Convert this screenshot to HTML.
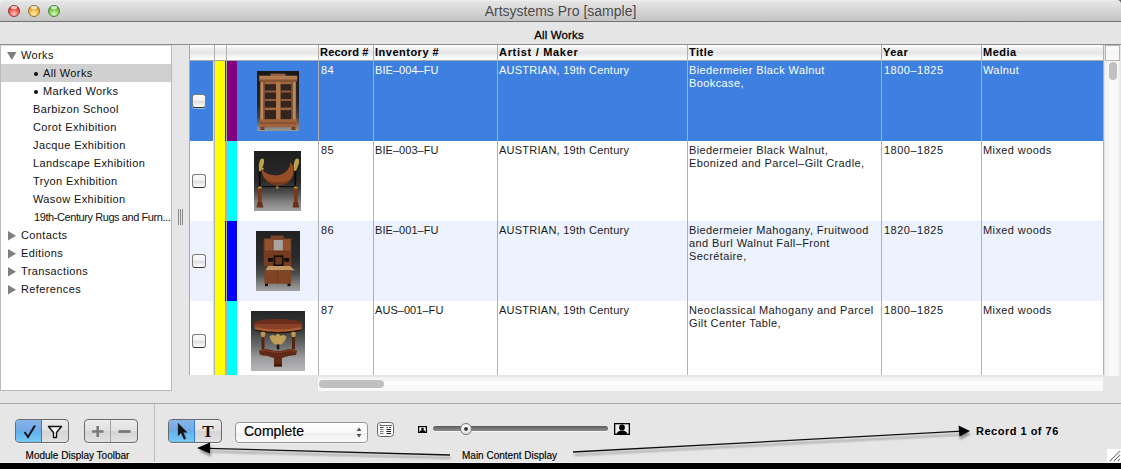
<!DOCTYPE html><html><head><meta charset="utf-8"><style>
*{box-sizing:border-box;margin:0;padding:0}
html,body{width:1121px;height:469px;overflow:hidden;background:#e6e6e6;font-family:"Liberation Sans",sans-serif;position:relative}
.a{position:absolute}
.sb{position:absolute;left:1px;width:170px;height:18px;font-size:11px;line-height:18px;color:#111;white-space:nowrap;letter-spacing:0.38px}
.cell{position:absolute;font-size:11px;line-height:13px;color:#1a1a1a;white-space:nowrap;letter-spacing:0.4px}
.sel .cell{color:#fff}
.hd{position:absolute;top:46px;font-size:11px;font-weight:bold;line-height:13px;color:#000;white-space:nowrap;letter-spacing:0.5px}
.cb{position:absolute;width:14px;height:14px;border-radius:3px;border:1px solid #7a7a7a;border-bottom:1.5px solid #333;background:linear-gradient(#fdfdfd,#f0f0f0 45%,#dedede 55%,#f5f5f5 85%,#fff);box-shadow:0 1px 0 rgba(255,255,255,.5)}
.vl{position:absolute;width:1px;background:#b0b0b0}
</style></head><body>
<div class="a" style="left:0;top:0;width:1121px;height:22px;background:linear-gradient(#f4f4f4 0px,#e6e6e6 1px,#d6d6d6 50%,#c4c4c4);border-bottom:1px solid #727272"></div>
<div class="a" style="left:0;top:3px;width:1121px;text-align:center;font-size:14px;line-height:16px;color:#4b4b4b">Artsystems Pro [sample]</div>
<div class="a" style="left:8px;top:5px;width:12px;height:12px;border-radius:50%;border:1px solid #8c3b34;background:radial-gradient(circle at 50% 80%,#ffc8c0,#f0483c 60%,#b42418)"></div>
<div class="a" style="left:11px;top:6px;width:6px;height:3px;border-radius:50%;background:rgba(255,255,255,.75)"></div>
<div class="a" style="left:28px;top:5px;width:12px;height:12px;border-radius:50%;border:1px solid #927035;background:radial-gradient(circle at 50% 80%,#fff0b0,#f0aa30 60%,#b07010)"></div>
<div class="a" style="left:31px;top:6px;width:6px;height:3px;border-radius:50%;background:rgba(255,255,255,.75)"></div>
<div class="a" style="left:48px;top:5px;width:12px;height:12px;border-radius:50%;border:1px solid #4b8636;background:radial-gradient(circle at 50% 80%,#dcf8bc,#72c446 60%,#38861c)"></div>
<div class="a" style="left:51px;top:6px;width:6px;height:3px;border-radius:50%;background:rgba(255,255,255,.75)"></div>
<svg class="a" style="left:1117px;top:0" width="4" height="4"><path d="M0 0H4V4Q4 0 0 0Z" fill="#4e5a6c"/></svg>
<svg class="a" style="left:0;top:0" width="5" height="5"><path d="M0 0H5Q0 0 0 5Z" fill="#f0f0f0"/></svg>
<div class="a" style="left:0;top:22px;width:1121px;height:22px;background:#e5e5e5"></div>
<div class="a" style="left:0;top:28.3px;width:1118px;text-align:center;font-size:11.5px;line-height:14px;color:#000;-webkit-text-stroke:0.3px #000;letter-spacing:0.15px">All Works</div>
<div class="a" style="left:0;top:44px;width:1121px;height:1px;background:#8c8c8c"></div>
<div class="a" style="left:0;top:45px;width:172px;height:346px;background:#fff;border:1px solid #bababa;border-top:1px solid #dcdcdc"></div>
<svg class="a" style="left:7px;top:52px" width="10" height="9"><path d="M0 0H9.5L4.75 8Z" fill="#7f7f7f"/></svg>
<div class="sb" style="left:21px;top:46px;">Works</div>
<div class="a" style="left:1px;top:64px;width:170px;height:18px;background:#d0d0d0"></div>
<div class="a" style="left:34px;top:72px;width:4px;height:4px;border-radius:50%;background:#111"></div>
<div class="sb" style="left:43px;top:64px;">All Works</div>
<div class="a" style="left:34px;top:90px;width:4px;height:4px;border-radius:50%;background:#111"></div>
<div class="sb" style="left:43px;top:82px;">Marked Works</div>
<div class="sb" style="left:33px;top:100px;">Barbizon School</div>
<div class="sb" style="left:33px;top:118px;">Corot Exhibition</div>
<div class="sb" style="left:33px;top:136px;">Jacque Exhibition</div>
<div class="sb" style="left:33px;top:154px;">Landscape Exhibition</div>
<div class="sb" style="left:33px;top:172px;">Tryon Exhibition</div>
<div class="sb" style="left:33px;top:190px;">Wasow Exhibition</div>
<div class="sb" style="left:34px;top:208px;letter-spacing:-0.42px;">19th-Century Rugs and Furn...</div>
<svg class="a" style="left:8px;top:231px" width="9" height="10"><path d="M0 0L8 4.75L0 9.5Z" fill="#7f7f7f"/></svg>
<div class="sb" style="left:21px;top:226px;">Contacts</div>
<svg class="a" style="left:8px;top:249px" width="9" height="10"><path d="M0 0L8 4.75L0 9.5Z" fill="#7f7f7f"/></svg>
<div class="sb" style="left:21px;top:244px;">Editions</div>
<svg class="a" style="left:8px;top:267px" width="9" height="10"><path d="M0 0L8 4.75L0 9.5Z" fill="#7f7f7f"/></svg>
<div class="sb" style="left:21px;top:262px;">Transactions</div>
<svg class="a" style="left:8px;top:285px" width="9" height="10"><path d="M0 0L8 4.75L0 9.5Z" fill="#7f7f7f"/></svg>
<div class="sb" style="left:21px;top:280px;">References</div>
<div class="a" style="left:178px;top:209px;width:1px;height:16px;background:#8a8a8a"></div>
<div class="a" style="left:180px;top:209px;width:1px;height:16px;background:#8a8a8a"></div>
<div class="a" style="left:182px;top:209px;width:1px;height:16px;background:#8a8a8a"></div>
<div class="a" style="left:189px;top:45px;width:915px;height:330px;background:#fff;border-left:1px solid #a8a8a8"></div>
<div class="a" style="left:190px;top:45px;width:914px;height:16px;background:linear-gradient(#fff 0px,#fafafa 1px,#eeeeee 4px,#eaeaea 6.5px,#e3e3e3 7.5px,#ebebeb 9px,#f6f6f6 12px,#fff 15px);border-bottom:1px solid #a9a9a9"></div>
<div class="hd" style="left:320px;letter-spacing:0.2px">Record #</div>
<div class="hd" style="left:375px;">Inventory #</div>
<div class="hd" style="left:499px;letter-spacing:0.7px">Artist / Maker</div>
<div class="hd" style="left:689px;">Title</div>
<div class="hd" style="left:883px;">Year</div>
<div class="hd" style="left:983px;">Media</div>
<div class="a sel" style="left:190px;top:61px;width:914px;height:80px;background:#3d80df">
<div class="a" style="left:23px;top:0;width:12px;height:80px;background:#ffff00"></div>
<div class="a" style="left:35px;top:0;width:12px;height:80px;background:#800080"></div>
<div class="cb" style="left:2px;top:33px"></div>
<div class="cell" style="left:131px;top:3px">84</div>
<div class="cell" style="left:185px;top:3px;letter-spacing:0.05px">BIE&ndash;004&ndash;FU</div>
<div class="cell" style="left:309px;top:3px;letter-spacing:0.25px">AUSTRIAN, 19th Century</div>
<div class="cell" style="left:499px;top:3px">Biedermeier Black Walnut</div>
<div class="cell" style="left:499px;top:16px">Bookcase,</div>
<div class="cell" style="left:694px;top:3px;letter-spacing:0.5px">1800&ndash;1825</div>
<div class="cell" style="left:793px;top:3px">Walnut</div>
</div>
<div class="a " style="left:190px;top:141px;width:914px;height:80px;background:#ffffff">
<div class="a" style="left:23px;top:0;width:12px;height:80px;background:#ffff00"></div>
<div class="a" style="left:35px;top:0;width:12px;height:80px;background:#00ffff"></div>
<div class="cb" style="left:2px;top:33px"></div>
<div class="cell" style="left:131px;top:3px">85</div>
<div class="cell" style="left:185px;top:3px;letter-spacing:0.05px">BIE&ndash;003&ndash;FU</div>
<div class="cell" style="left:309px;top:3px;letter-spacing:0.25px">AUSTRIAN, 19th Century</div>
<div class="cell" style="left:499px;top:3px">Biedermeier Black Walnut,</div>
<div class="cell" style="left:499px;top:16px">Ebonized and Parcel&ndash;Gilt Cradle,</div>
<div class="cell" style="left:694px;top:3px;letter-spacing:0.5px">1800&ndash;1825</div>
<div class="cell" style="left:793px;top:3px">Mixed woods</div>
</div>
<div class="a " style="left:190px;top:221px;width:914px;height:80px;background:#edf3fe">
<div class="a" style="left:23px;top:0;width:12px;height:80px;background:#ffff00"></div>
<div class="a" style="left:35px;top:0;width:12px;height:80px;background:#0000ff"></div>
<div class="cb" style="left:2px;top:33px"></div>
<div class="cell" style="left:131px;top:3px">86</div>
<div class="cell" style="left:185px;top:3px;letter-spacing:0.05px">BIE&ndash;001&ndash;FU</div>
<div class="cell" style="left:309px;top:3px;letter-spacing:0.25px">AUSTRIAN, 19th Century</div>
<div class="cell" style="left:499px;top:3px">Biedermeier Mahogany, Fruitwood</div>
<div class="cell" style="left:499px;top:16px">and Burl Walnut Fall&ndash;Front</div>
<div class="cell" style="left:499px;top:29px">Secr&eacute;taire,</div>
<div class="cell" style="left:694px;top:3px;letter-spacing:0.5px">1820&ndash;1825</div>
<div class="cell" style="left:793px;top:3px">Mixed woods</div>
</div>
<div class="a " style="left:190px;top:301px;width:914px;height:74px;background:#ffffff">
<div class="a" style="left:23px;top:0;width:12px;height:74px;background:#ffff00"></div>
<div class="a" style="left:35px;top:0;width:12px;height:74px;background:#00ffff"></div>
<div class="cb" style="left:2px;top:33px"></div>
<div class="cell" style="left:131px;top:3px">87</div>
<div class="cell" style="left:185px;top:3px;letter-spacing:0.05px">AUS&ndash;001&ndash;FU</div>
<div class="cell" style="left:309px;top:3px;letter-spacing:0.25px">AUSTRIAN, 19th Century</div>
<div class="cell" style="left:499px;top:3px">Neoclassical Mahogany and Parcel</div>
<div class="cell" style="left:499px;top:16px">Gilt Center Table,</div>
<div class="cell" style="left:694px;top:3px;letter-spacing:0.5px">1800&ndash;1825</div>
<div class="cell" style="left:793px;top:3px">Mixed woods</div>
</div>
<div class="vl" style="left:214px;top:45px;height:330px"></div>
<div class="vl" style="left:226px;top:45px;height:330px"></div>
<div class="vl" style="left:318px;top:45px;height:330px"></div>
<div class="vl" style="left:373px;top:45px;height:330px"></div>
<div class="vl" style="left:497px;top:45px;height:330px"></div>
<div class="vl" style="left:687px;top:45px;height:330px"></div>
<div class="vl" style="left:881px;top:45px;height:330px"></div>
<div class="vl" style="left:981px;top:45px;height:330px"></div>
<div class="vl" style="left:1103px;top:45px;height:330px"></div>
<div class="a" style="left:1104px;top:45px;width:16px;height:331px;background:linear-gradient(90deg,#f0f0f0,#fafafa 40%,#f7f7f7 85%,#e9e9e9);border-left:1px solid #e4e4e4"></div>
<div class="a" style="left:1105px;top:45px;width:15px;height:16px;background:linear-gradient(#fff,#f4f4f4 50%,#fcfcfc);border:1px solid #b4b4b4"></div>
<div class="a" style="left:1109px;top:62px;width:8px;height:18px;border-radius:4px;background:#c0c0c0"></div>
<div class="a" style="left:318px;top:377px;width:785px;height:14px;background:linear-gradient(#f0f0f0,#fbfbfb 40%,#f8f8f8)"></div>
<div class="a" style="left:319px;top:380px;width:65px;height:8px;border-radius:4px;background:#c0c0c0"></div>
<svg class="a" style="left:257px;top:71px;filter:saturate(.8) brightness(.85) hue-rotate(-4deg)" width="42" height="60" viewBox="0 0 42 60"><defs><linearGradient id="g1" x1="0" y1="0" x2="0" y2="1"><stop offset="0" stop-color="#1c1c1c"/><stop offset="0.55" stop-color="#2c2c2c"/><stop offset="0.78" stop-color="#505050"/><stop offset="0.9" stop-color="#8a8a8a"/><stop offset="1" stop-color="#b4b4b4"/></linearGradient></defs><rect width="42" height="60" fill="url(#g1)"/><rect x="13.5" y="2.6" width="15" height="3" fill="#b8703a"/><rect x="2.2" y="4.7" width="38" height="5.7" fill="#d8904c"/><rect x="2.5" y="8.5" width="37.5" height="1.5" fill="#a86030"/><rect x="3.4" y="10.4" width="35.7" height="41.5" fill="#c87636"/><rect x="3.6" y="11" width="2.9" height="38" fill="#e4a460"/><rect x="35.5" y="11" width="2.9" height="38" fill="#e0a05a"/><rect x="6.5" y="11" width="1" height="38" fill="#7a4020"/><rect x="34.5" y="11" width="1" height="38" fill="#7a4020"/><rect x="7.9" y="13.2" width="11.2" height="35.2" fill="#3e2a1e"/><rect x="23.4" y="13.2" width="10.8" height="35.2" fill="#3e2a1e"/><rect x="19.1" y="11" width="4.3" height="38" fill="#d88c48"/><rect x="7.9" y="19.5" width="11.2" height="2" fill="#b06a36"/><rect x="23.4" y="19.5" width="10.8" height="2" fill="#b06a36"/><rect x="7.9" y="28" width="11.2" height="2" fill="#b06a36"/><rect x="23.4" y="28" width="10.8" height="2" fill="#b06a36"/><rect x="7.9" y="36.6" width="11.2" height="2.5" fill="#c07838"/><rect x="23.4" y="36.6" width="10.8" height="2.5" fill="#c07838"/><rect x="2.8" y="48.4" width="37" height="7.8" fill="#c67434"/><rect x="3" y="51.5" width="36.5" height="1.2" fill="#9a5426"/><rect x="3.5" y="56" width="4" height="3" fill="#8a4a20"/><rect x="34.5" y="56" width="4" height="3" fill="#8a4a20"/></svg>
<svg class="a" style="left:254px;top:151px;filter:saturate(.85) brightness(.92)" width="47" height="60" viewBox="0 0 47 60"><defs><linearGradient id="g2" x1="0" y1="0" x2="0" y2="1"><stop offset="0" stop-color="#222"/><stop offset="0.5" stop-color="#2c2c2c"/><stop offset="0.68" stop-color="#505050"/><stop offset="0.85" stop-color="#8c8c8c"/><stop offset="1" stop-color="#b0b0b0"/></linearGradient></defs><rect width="47" height="60" fill="url(#g2)"/><rect x="4.8" y="18" width="1.8" height="18" fill="#0c0a08"/><rect x="40.4" y="17" width="1.8" height="19" fill="#0c0a08"/><path d="M5 20 Q4 14 6 9 Q8 6.5 10 8.5 Q10.5 12 9 15 Q8 18 6.6 20.5Z" fill="#d2b040"/><path d="M40 19.5 Q39 13 41 9 Q43 6.5 45 8.5 Q45.5 12 44 15 Q43 18 41.8 20Z" fill="#d2b040"/><path d="M7.5 18 Q8 31 23 34.5 Q37 34 39.5 22 Q40 15 36.5 11 Q35.5 22 23 24.5 Q12 24.5 7.5 18 Z" fill="#b0501e"/><path d="M10 27 Q14 33.5 23 34 Q34 33.5 38 27 Q34 31 23 31.5 Q14 31 10 27Z" fill="#8c3a14"/><path d="M7 18.5 Q8 16 10 17 L9 19.5Z" fill="#c9a23a"/><rect x="3" y="35" width="41" height="1.2" fill="#120c08"/><rect x="22" y="35.5" width="2.5" height="2" fill="#c9a03a"/><rect x="4" y="36" width="3.6" height="16" fill="#8e3c18"/><rect x="40" y="36" width="3.6" height="16" fill="#8e3c18"/><rect x="4" y="35.5" width="3.6" height="2" fill="#c89838"/><rect x="40" y="35.5" width="3.6" height="2" fill="#c89838"/><path d="M3.5 51 L8 51 L9.5 56.5 L2.5 56.5Z" fill="#7e3216"/><path d="M39.5 51 L44 51 L45.5 56.5 L38.5 56.5Z" fill="#7e3216"/></svg>
<svg class="a" style="left:256px;top:231px;filter:saturate(.85) brightness(.92)" width="44" height="60" viewBox="0 0 44 60"><defs><linearGradient id="g3" x1="0" y1="0" x2="0" y2="1"><stop offset="0" stop-color="#242424"/><stop offset="0.5" stop-color="#303030"/><stop offset="0.72" stop-color="#555"/><stop offset="0.88" stop-color="#8c8c8c"/><stop offset="1" stop-color="#b0b0b0"/></linearGradient></defs><rect width="44" height="60" fill="url(#g3)"/><rect x="14.8" y="4.6" width="12.7" height="3.6" fill="#8c4a22"/><rect x="7.7" y="7.4" width="27.5" height="12.8" fill="#8e4220"/><rect x="9" y="8.5" width="7.5" height="11" fill="#a8582a"/><rect x="27" y="8.5" width="7.5" height="11" fill="#a8582a"/><rect x="17.6" y="8.9" width="9.2" height="10.5" fill="#b8b2ae"/><rect x="7.7" y="20.2" width="27.5" height="15" fill="#8a401e"/><rect x="12" y="27" width="5" height="3.7" fill="#1c0e06"/><rect x="28.2" y="27" width="5" height="3.7" fill="#1c0e06"/><rect x="17.6" y="24.4" width="9.9" height="10.6" fill="#140a04"/><rect x="19.2" y="26" width="6.7" height="7.5" fill="#7a3c1a"/><path d="M12 35 L34 35 L38.7 39.3 L9.5 39.3Z" fill="#dba262"/><rect x="8.4" y="39.3" width="26.8" height="13.4" fill="#94481e"/><rect x="21" y="40" width="1" height="12.5" fill="#7c4020"/><rect x="9" y="52.7" width="3" height="2.4" fill="#1c100a"/><rect x="31.5" y="52.7" width="3" height="2.4" fill="#1c100a"/></svg>
<svg class="a" style="left:251px;top:311px;filter:saturate(.85) brightness(.95)" width="54" height="60" viewBox="0 0 54 60"><defs><linearGradient id="g4" x1="0" y1="0" x2="0" y2="1"><stop offset="0" stop-color="#26282c"/><stop offset="0.3" stop-color="#3a3a3a"/><stop offset="0.55" stop-color="#6c6c6c"/><stop offset="0.78" stop-color="#a4a4a8"/><stop offset="1" stop-color="#c0c0c4"/></linearGradient></defs><rect width="54" height="60" fill="url(#g4)"/><ellipse cx="27" cy="12.5" rx="24.5" ry="4.5" fill="#7a2e18"/><path d="M3 13 L51 13 L50 18 Q27 23 4 18Z" fill="#9a4222"/><path d="M3.5 16 Q27 21 50.5 16 L50 18.5 Q27 23.5 4 18.5Z" fill="#c2602e"/><path d="M4 18.5 Q27 23.5 50 18.5 L49.5 20 Q27 25 4.5 20Z" fill="#3a160a"/><rect x="10.5" y="22" width="3" height="16" fill="#5e2610"/><rect x="41" y="22" width="3" height="16" fill="#5e2610"/><path d="M9.5 22 Q12 19.5 14.5 22 L13.5 26 L10.5 26Z" fill="#c8a048"/><path d="M40 22 Q42.5 19.5 45 22 L44 26 L41 26Z" fill="#c8a048"/><path d="M18.5 26 Q21 22.5 24 25 L27 22.5 L30 25 Q33 22.5 35.5 26 Q34 31 30.5 33.5 L23.5 33.5 Q20 31 18.5 26Z" fill="#cca64e"/><rect x="25.8" y="33.5" width="2.5" height="5" fill="#2a1208"/><path d="M8 39.5 Q14 37 20 39 Q27 41 34 39 Q40 37 46 39.5 L45 44 Q37 44.5 31 47 L31 55.5 L23 55.5 L23 47 Q17 44.5 9 44 Z" fill="#6c2a12"/><path d="M9 39.5 Q14 37.5 20 39.5 Q27 41.5 34 39.5 Q40 37.5 45 39.5 L45 41 Q40 39 34 41 Q27 43 20 41 Q14 39 9 41Z" fill="#8e3c1a"/><path d="M23 53 L31 53 L31 55.5 L23 55.5Z" fill="#4a1c0a"/></svg>
<div class="a" style="left:0;top:403px;width:1121px;height:1px;background:#a8a8a8"></div>
<div class="a" style="left:154px;top:404px;width:1px;height:58px;background:#bdbdbd"></div>
<div class="a" style="left:15px;top:419px;width:54px;height:24px;border:1px solid #6a6a6a;border-radius:4px;overflow:hidden;background:linear-gradient(#ececec,#e0e0e0 50%,#d4d4d4 51%,#e2e2e2);box-shadow:0 1px 0 rgba(255,255,255,.6)"><div class="a" style="left:0;top:0;width:25px;height:22px;background:linear-gradient(#86b4ea,#72a8e6 50%,#5fb2ec 51%,#78c8f4);"></div><div class="a" style="left:25px;top:0;width:1px;height:22px;background:#2a7ce0"></div></div><svg class="a" style="left:22px;top:423px" width="16" height="16"><path d="M2.5 9 L6 14 L13 2.5" fill="none" stroke="#111" stroke-width="2"/></svg><svg class="a" style="left:47px;top:425px" width="16" height="14"><path d="M1.5 1.5 H14.5 L9.5 7.5 V12.5 H6.5 V7.5 Z" fill="#fff" stroke="#111" stroke-width="1.4" stroke-linejoin="round"/></svg>
<div class="a" style="left:84px;top:419px;width:54px;height:24px;border:1px solid #6a6a6a;border-radius:4px;overflow:hidden;background:linear-gradient(#ececec,#e0e0e0 50%,#d4d4d4 51%,#e2e2e2);box-shadow:0 1px 0 rgba(255,255,255,.6)"><div class="a" style="left:25px;top:0;width:1px;height:22px;background:#a4a4a4"></div></div><svg class="a" style="left:92px;top:426px" width="12" height="12"><path d="M5.7 0V11M0 5.5H11.5" stroke="#7a7a7a" stroke-width="2.6"/></svg><svg class="a" style="left:117.5px;top:426px" width="14" height="12"><path d="M0.5 5.5H12.5" stroke="#7a7a7a" stroke-width="2.8"/></svg>
<div class="a" style="left:0;top:449.5px;width:155px;text-align:center;font-size:10px;line-height:12px;color:#000;-webkit-text-stroke:0.15px #000">Module Display Toolbar</div>
<div class="a" style="left:168px;top:419px;width:54px;height:24px;border:1px solid #6a6a6a;border-radius:4px;overflow:hidden;background:linear-gradient(#ececec,#e0e0e0 50%,#d4d4d4 51%,#e2e2e2);box-shadow:0 1px 0 rgba(255,255,255,.6)"><div class="a" style="left:0;top:0;width:25px;height:22px;background:linear-gradient(#86b4ea,#72a8e6 50%,#5fb2ec 51%,#78c8f4);"></div><div class="a" style="left:25px;top:0;width:1px;height:22px;background:#2a7ce0"></div></div><svg class="a" style="left:176px;top:422px" width="14" height="20"><path d="M2 1 L2 14 L5 11 L8 17.5 L10 16.5 L7.5 10.5 L11.5 10.5 Z" fill="#111" stroke="#555" stroke-width="0.5"/></svg><div class="a" style="left:194px;top:420px;width:28px;text-align:center;font-family:'Liberation Serif',serif;font-size:17px;font-weight:bold;line-height:24px;color:#111">T</div>
<div class="a" style="left:235px;top:422px;width:133px;height:21px;border:1px solid #949494;border-radius:4px;background:linear-gradient(#ffffff,#f8f8f8 50%,#eeeeee 51%,#fbfbfb);box-shadow:0 1px 0 rgba(255,255,255,.5)"></div>
<div class="a" style="left:244px;top:422.6px;font-size:14px;line-height:17px;color:#000;-webkit-text-stroke:0.15px #000">Complete</div>
<svg class="a" style="left:355px;top:426px" width="8" height="13"><path d="M1.5 5 L4 1.5 L6.5 5Z M1.5 8 L4 11.5 L6.5 8Z" fill="#555"/></svg>
<svg class="a" style="left:377px;top:422px" width="18" height="16"><rect x="0.5" y="0.5" width="16" height="14" rx="3" fill="#fafafa" stroke="#666"/><path d="M2.5 3.5H15" stroke="#666" stroke-width="1"/><path d="M3 2.5L4.5 3.5" stroke="#555" stroke-width="0.8"/><path d="M3 5.5H6.5M9.5 5.5H11M12 5.5H14" stroke="#444" stroke-width="1"/><path d="M3 7.5H6.5M3 9.5H6.5M3 11.5H6.5" stroke="#777" stroke-width="1"/><path d="M9.5 7.5H14M9.5 9.5H14M9.5 11.5H14" stroke="#222" stroke-width="1"/></svg>
<svg class="a" style="left:418px;top:426px" width="9" height="7"><rect width="9" height="7" fill="#000"/><rect x="1.2" y="1.2" width="6.6" height="4.6" fill="#eee"/><circle cx="4.5" cy="3" r="1.3" fill="#000"/><path d="M1.5 6 Q2 4 4.5 4 Q7 4 7.5 6Z" fill="#000"/></svg>
<div class="a" style="left:433px;top:426px;width:175px;height:5px;border-radius:3px;background:linear-gradient(#5a5a5a,#777 50%,#8c8c8c);box-shadow:0 1px 0 rgba(255,255,255,.6)"></div>
<div class="a" style="left:460px;top:423px;width:12px;height:12px;border-radius:50%;border:1px solid #7a7a7a;background:radial-gradient(circle at 50% 35%,#fff,#ececec 55%,#c4c4c4)"></div>
<div class="a" style="left:464px;top:427px;width:4px;height:4px;border-radius:50%;background:radial-gradient(circle at 50% 40%,#222,#666)"></div>
<svg class="a" style="left:614px;top:423px" width="16" height="12"><rect width="16" height="12" fill="#000"/><rect x="1.3" y="1.3" width="13.4" height="9.4" fill="#eee"/><circle cx="8" cy="4.5" r="2.9" fill="#000"/><path d="M2.5 11 Q3.5 7.5 8 7.5 Q12.5 7.5 13.5 11Z" fill="#000"/></svg>
<svg class="a" style="left:0;top:400px" width="1121" height="62"><defs><filter id="sh" x="-20%" y="-50%" width="140%" height="200%"><feGaussianBlur stdDeviation="1.2"/></filter></defs><g opacity="0.35" filter="url(#sh)" transform="translate(1,3)"><path d="M210 48.5 L450 55" stroke="#000" stroke-width="1.6"/><path d="M573 52 L962 31.5" stroke="#000" stroke-width="1.6"/><path d="M198 48 L210 42 L210 54Z"/><path d="M970 31 L958 25.5 L959 37Z"/></g><path d="M208 48.3 L450 55" stroke="#111" stroke-width="1.3"/><path d="M573 52 L962 31.2" stroke="#111" stroke-width="1.3"/><path d="M197 48 L210 42.5 L210 53.5Z" fill="#000"/><path d="M970 31 L958.5 25.5 L959.5 36.5Z" fill="#000"/></svg>
<div class="a" style="left:462px;top:449.5px;font-size:10px;line-height:12px;color:#000;-webkit-text-stroke:0.15px #000">Main Content Display</div>
<div class="a" style="left:976px;top:424.5px;font-size:11px;font-weight:bold;line-height:13px;color:#000;letter-spacing:0.5px">Record 1 of 76</div>
<div class="a" style="left:1106px;top:448px;width:15px;height:14px;background:#fff;border-left:1px solid #e8e8e8;border-top:1px solid #e8e8e8"></div>
<svg class="a" style="left:1107px;top:449px" width="14" height="13"><path d="M3 12 L13 2 M7 12 L13 6 M11 12 L13 10" stroke="#555" stroke-width="1.2" stroke-dasharray="1 0.5"/></svg>
<div class="a" style="left:0;top:462px;width:1121px;height:1px;background:#f2f2f2"></div>
<div class="a" style="left:0;top:463px;width:1121px;height:6px;background:#000"></div>
</body></html>
